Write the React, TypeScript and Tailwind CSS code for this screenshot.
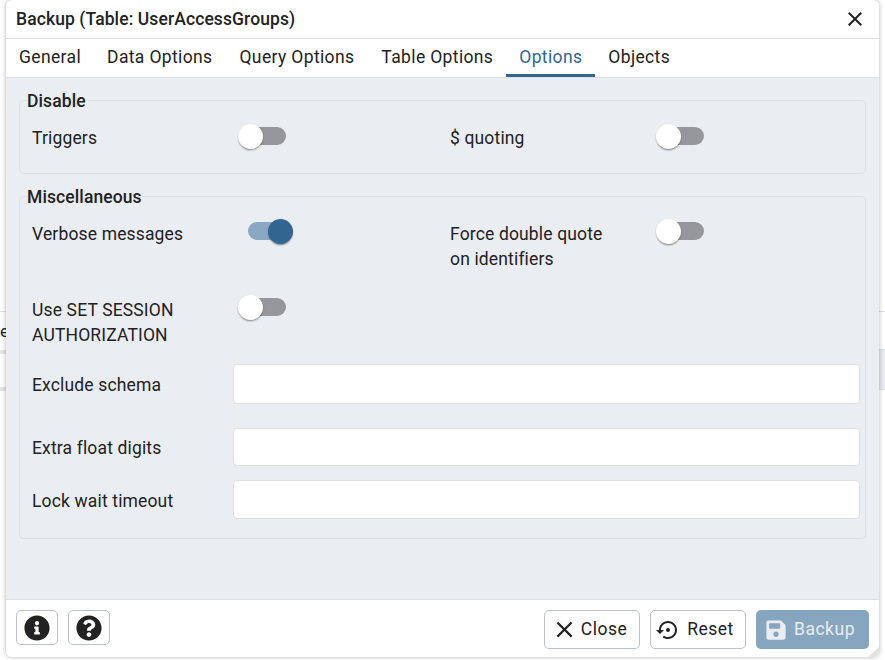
import { FaInfoCircle, FaQuestionCircle, FaSave } from "react-icons/fa";

const F = "font-['Roboto',sans-serif]";

function CloseIcon({ className }: { className: string }) {
  return (
    <svg viewBox="0 0 24 24" className={className} fill="currentColor">
      <path d="M19 6.41L17.59 5 12 10.59 6.41 5 5 6.41 10.59 12 5 17.59 6.41 19 12 13.41 17.59 19 19 17.59 13.41 12z" />
    </svg>
  );
}

function RestoreIcon({ className }: { className: string }) {
  return (
    <svg viewBox="0 0 24 24" className={className} fill="currentColor">
      <path d="M14 12c0-1.1-.9-2-2-2s-2 .9-2 2 .9 2 2 2 2-.9 2-2zm-2-9c-4.97 0-9 4.03-9 9H0l4 4 4-4H5c0-3.87 3.13-7 7-7s7 3.13 7 7-3.13 7-7 7c-1.51 0-2.91-.49-4.06-1.3l-1.42 1.44C8.04 20.3 9.94 21 12 21c4.97 0 9-4.03 9-9s-4.03-9-9-9z" />
    </svg>
  );
}

function Switch({ on = false }: { on?: boolean }) {
  return (
    <div className="relative h-[25px] w-[54px] shrink-0">
      <div className={`absolute top-[3px] left-[9px] h-[18px] w-[38px] rounded-full ${on ? "bg-[#8aa8c3]" : "bg-[#96979b]"}`} />
      <div
        className={`absolute top-0 h-[25px] w-[25px] rounded-full shadow-[0_2px_2px_-1px_rgba(0,0,0,0.3),0_1px_2px_rgba(0,0,0,0.2)] ${
          on ? "left-[29px] bg-[#326690]" : "left-[-1px] bg-white"
        }`}
      />
    </div>
  );
}

function SwitchCell({ label, on, pt }: { label: React.ReactNode; on?: boolean; pt: string }) {
  return (
    <div className="flex items-start">
      <div className={`w-[207px] shrink-0 ${pt} leading-[25px]`}>{label}</div>
      <Switch on={on} />
    </div>
  );
}

function InputRow({ label, h, mb, pt }: { label: string; h: string; mb: string; pt: string }) {
  return (
    <div className={`flex items-center ${mb}`}>
      <div className={`w-[201px] shrink-0 ${pt} leading-[25px]`}>{label}</div>
      <div className={`${h} flex-1 rounded-[4px] border border-[#dde0e6] bg-white`} />
    </div>
  );
}

function Tab({ label, active, extra = "" }: { label: string; active?: boolean; extra?: string }) {
  return (
    <div
      className={`flex h-full items-center px-[13px] tracking-[0.36px] ${extra} ${
        active ? "border-b-[3px] border-[#326690] pt-[1px] text-[#326690]" : "pb-[2px] text-[#222222]"
      }`}
    >
      {label}
    </div>
  );
}

function Outline({ children, w, pr }: { children: React.ReactNode; w: string; pr: string }) {
  return (
    <div className={`flex h-[39px] ${w} ${pr} items-center justify-center rounded-[5px] border border-[#bac1cd] bg-white tracking-[0.5px] text-[#222222]`}>
      {children}
    </div>
  );
}

export default function App() {
  return (
    <div className={`relative h-[660px] w-[885px] overflow-hidden bg-white ${F} text-[17.5px] tracking-[0.15px] text-[#222222]`}>
      <div className="absolute top-[311px] left-0 h-px w-full bg-[#dde0e6]" />
      <div className="absolute top-[350px] left-0 h-[4px] w-[6px] bg-[#e3e5ea]" />
      <div className="absolute top-[387px] left-0 h-[4px] w-[6px] bg-[#e3e5ea]" />
      <div className="absolute top-[349px] right-0 h-[41px] w-[6px] border-y border-[#dde0e6] bg-[#e9ebef]" />
      <div className="absolute top-[321px] left-0 text-[17px] leading-5">e</div>

      <div className="relative ml-[6px] flex h-[657px] w-[873px] flex-col overflow-hidden rounded-[6px] bg-white shadow-[0_0_5px_rgba(0,0,0,0.3)]">
        <div className="flex h-[39px] shrink-0 items-center justify-between border-b border-[#dde0e6] pr-[12px] pl-[10px]">
          <div className="font-medium tracking-[0.1px]">Backup (Table: UserAccessGroups)</div>
          <CloseIcon className="h-[24px] w-[24px]" />
        </div>
        <div className="flex h-[39px] shrink-0 border-b border-[#dde0e6]">
          <Tab label="General" />
          <Tab label="Data Options" />
          <Tab label="Query Options" extra="ml-[1px]" />
          <Tab label="Table Options" extra="ml-[1px]" />
          <Tab label="Options" active />
          <Tab label="Objects" />
        </div>

        <div className="flex flex-1 flex-col gap-[11px] bg-[#eaedf2] px-[13px] pt-[11px]">
          <fieldset className="h-[85px] rounded-[5px] border border-[#dde0e6] px-[12px]">
            <legend className="ml-[-5px] px-0 pt-[2px] leading-5 font-medium tracking-[0.1px]">Disable</legend>
            <div className="mt-[13px] grid grid-cols-[418px_1fr]">
              <SwitchCell label="Triggers" pt="pt-[2px]" />
              <SwitchCell label="$ quoting" pt="pt-[2px]" />
            </div>
          </fieldset>

          <fieldset className="h-[354px] rounded-[5px] border border-[#dde0e6] pr-[5px] pl-[12px]">
            <legend className="ml-[-5px] px-0 pt-[2px] leading-5 font-medium tracking-[0.1px]">Miscellaneous</legend>
            <div className="mt-[12px] grid h-[76px] grid-cols-[418px_1fr]">
              <SwitchCell label="Verbose messages" on pt="pt-[3px]" />
              <SwitchCell
                pt="pt-[3px]"
                label={
                  <>
                    Force double quote
                    <br />
                    on identifiers
                  </>
                }
              />
            </div>
            <div className="h-[69px]">
              <SwitchCell
                pt="pt-[3px]"
                label={
                  <>
                    Use SET SESSION
                    <br />
                    AUTHORIZATION
                  </>
                }
              />
            </div>
            <InputRow label="Exclude schema" h="h-[40px]" mb="mb-[24px]" pt="pt-[2px]" />
            <InputRow label="Extra float digits" h="h-[38px]" mb="mb-[14px]" pt="pt-[2px]" />
            <InputRow label="Lock wait timeout" h="h-[39px]" mb="" pt="pt-[4px]" />
          </fieldset>
        </div>

        <div className="flex h-[58px] shrink-0 items-start justify-between border-t border-[#dde0e6] bg-white pt-[10px] pr-[10px] pl-[10px]">
          <div className="flex gap-[10px]">
            <div className="flex h-[35px] w-[42px] items-center justify-center rounded-[5px] border border-[#bac1cd]">
              <FaInfoCircle className="h-[26px] w-[26px]" />
            </div>
            <div className="flex h-[35px] w-[42px] items-center justify-center rounded-[5px] border border-[#bac1cd]">
              <FaQuestionCircle className="h-[26px] w-[26px]" />
            </div>
          </div>
          <div className="flex gap-[10px]">
            <Outline w="w-[96px]" pr="pr-[2px]">
              <CloseIcon className="mr-[3px] ml-[-4px] h-[27px] w-[27px]" />
              Close
            </Outline>
            <Outline w="w-[96px]" pr="pr-[6px]">
              <RestoreIcon className="mr-[7px] h-[24px] w-[24px]" />
              Reset
            </Outline>
            <div className="flex h-[39px] w-[113px] items-center justify-center gap-[7px] rounded-[5px] bg-[#86a5bf] pr-[5px] tracking-[0.5px] text-[#e9edf2]">
              <FaSave className="h-[22px] w-[22px]" />
              Backup
            </div>
          </div>
        </div>

        <svg viewBox="0 0 12 10" className="absolute right-0 bottom-0 h-[10px] w-[12px] text-[#dfe2e8]" fill="currentColor">
          <path d="M12 0V10H1z" />
        </svg>
      </div>
    </div>
  );
}
